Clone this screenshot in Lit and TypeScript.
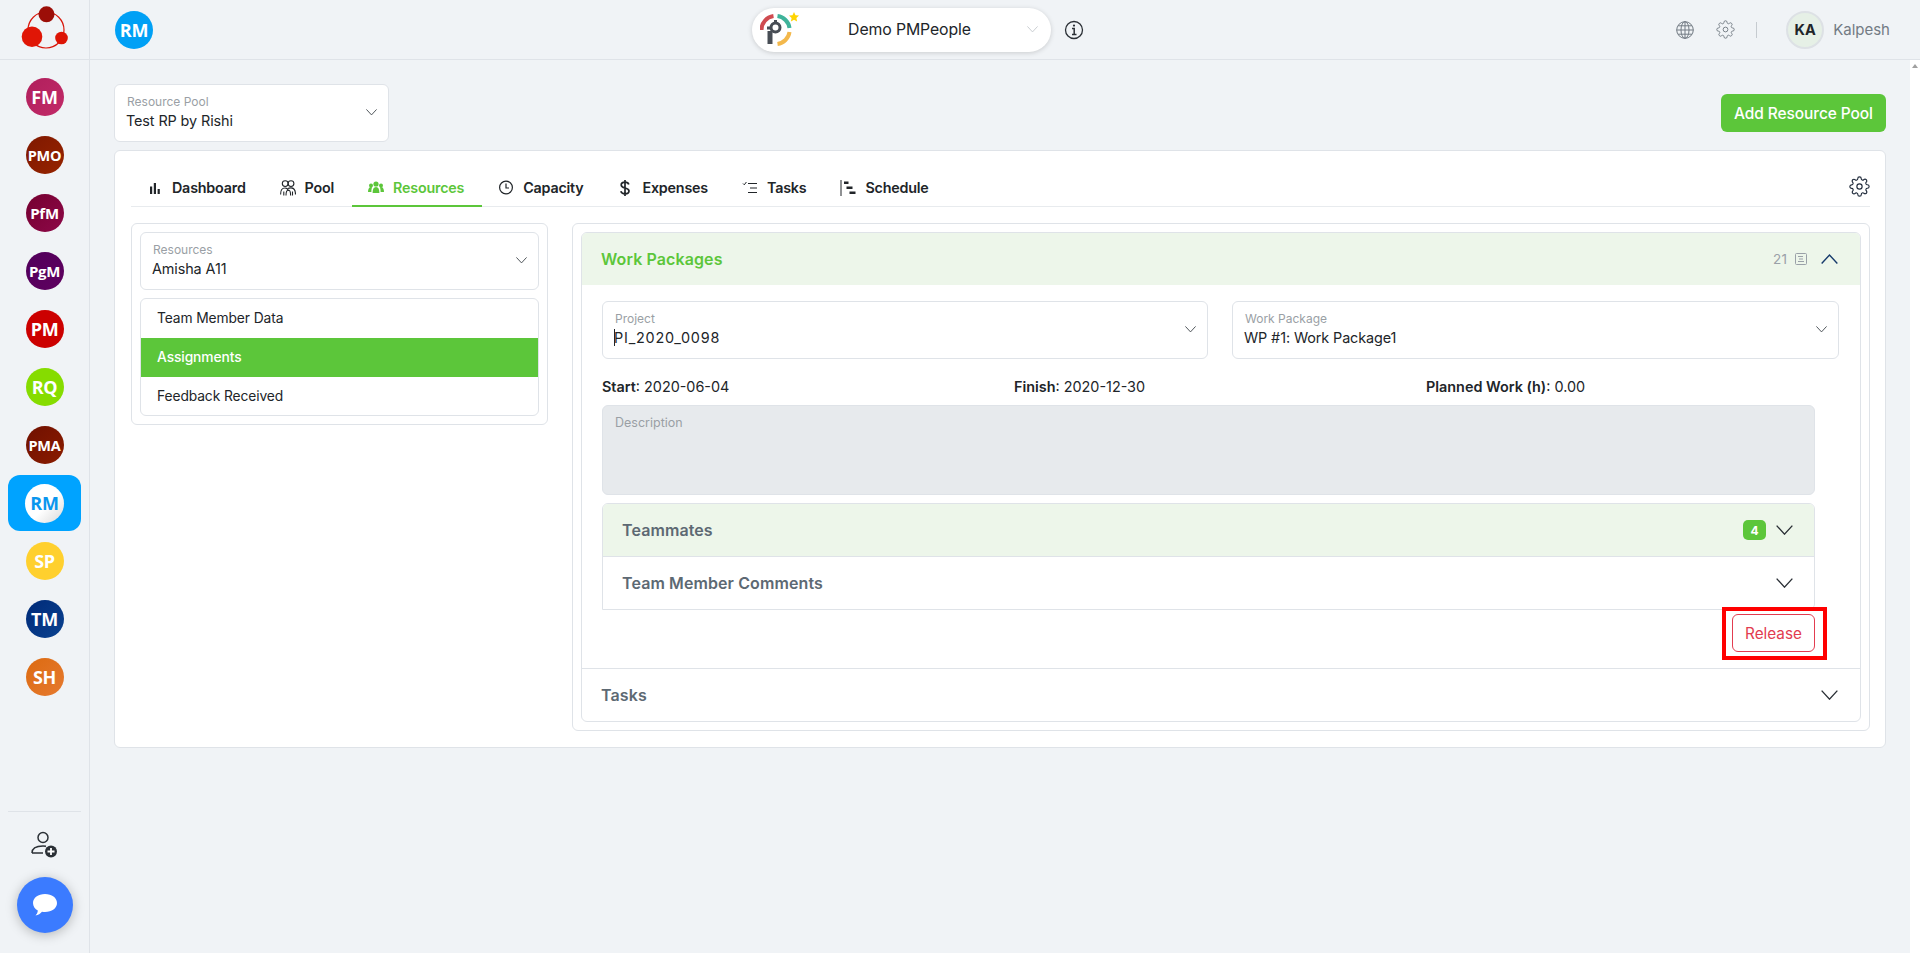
import { LitElement, html, css, svg } from 'lit';
import { customElement } from 'lit/decorators.js';

const MODULES = [
  { code: 'FM', bg: 'linear-gradient(135deg,#b01f5c,#c22a68)', size: 18 },
  { code: 'PMO', bg: 'linear-gradient(135deg,#7f1800,#962400)', size: 14.5 },
  { code: 'PfM', bg: 'linear-gradient(135deg,#750030,#8d0848)', size: 15 },
  { code: 'PgM', bg: 'linear-gradient(135deg,#50005a,#600060)', size: 15 },
  { code: 'PM', bg: '#cc0000', size: 18 },
  { code: 'RQ', bg: '#86dc00', size: 18 },
  { code: 'PMA', bg: 'linear-gradient(135deg,#701000,#8a1c00)', size: 14.5 },
  { code: 'RM', bg: 'linear-gradient(135deg,#fff 55%,#d8d8d8)', size: 18, active: true },
  { code: 'SP', bg: '#ffd02e', size: 18 },
  { code: 'TM', bg: 'linear-gradient(135deg,#002a78,#0a4290)', size: 18 },
  { code: 'SH', bg: 'linear-gradient(135deg,#dc6a10,#e67a30)', size: 18 },
];

const chevron = (w: number, color: string, up = false) => html`
  <svg width=${w} height=${w * 0.6} viewBox="0 0 16 9.6" fill="none" stroke=${color} stroke-width="1.3">
    <path d=${up ? 'M.6 9 8 1l7.4 8' : 'M.6.6 8 8.6 15.4.6'} />
  </svg>
`;

const TAB_ICONS: Record<string, unknown> = {
  Dashboard: svg`<path d="M3 6.5h2.200V14H3zM6.800 3h2.200v11H6.800zM10.600 9h2.200v5h-2.200z" fill="currentColor"/>`,
  Pool: svg`<g fill="none" stroke="currentColor" stroke-width="1.1"><circle cx="5.200" cy="3.600" r="2.900"/><circle cx="11" cy="3.600" r="2.900"/><path d="M.6 14.500c0-4.500 1.400-6.500 4.400-6.500 2 0 3 1 3.400 3M8 8.500c1-.6 2-.6 3-.6 3 0 4.500 2 4.500 6.600M3.800 15.500v-4M12.500 15.500v-4M6 15.500c0-3.500 .8-5.500 2.400-5.500s2.200 2 2.200 5.500"/></g>`,
  Resources: svg`<g fill="currentColor"><circle cx="8" cy="4" r="2.600"/><circle cx="3" cy="5.400" r="2"/><circle cx="13" cy="5.400" r="2"/><path d="M4.600 13c0-4 1-6 3.400-6s3.400 2 3.400 6zM0 12c0-3 1-5 3-5 .8 0 1.200.3 1.200.3C3.500 8.500 3.400 10 3.400 12zM16 12c0-3-1-5-3-5-.8 0-1.200.3-1.200.3.700 1.200.800 2.700.800 4.700z"/></g>`,
  Capacity: svg`<g fill="none" stroke="currentColor" stroke-width="1.2"><circle cx="8" cy="7.5" r="6.400"/><path d="M8 3.500V8H11"/></g>`,
  Expenses: svg`<path d="M11.800 4.400C11.300 2.900 10 2.200 8 2.200c-2.300 0-3.800 1.100-3.800 2.800 0 4 7.800 2 7.800 6 0 1.800-1.600 2.800-4 2.800-2.200 0-3.700-.9-4.200-2.500M8 0v16" fill="none" stroke="currentColor" stroke-width="1.700"/>`,
  Tasks: svg`<path d="M6 3.500h9M8 8h7M6 12.500h9M1 3.500l1.300 1.300L4.400 2" fill="none" stroke="currentColor" stroke-width="1"/>`,
  Schedule: svg`<path d="M1 0v16" stroke="currentColor" stroke-width="1" fill="none"/><path d="M4 1.500h4.500v2.400H4zM6.500 6.500h6v2.400h-6zM9.500 11.500h6v2.400h-6z" fill="currentColor"/>`,
};

const TABS = [
  { name: 'Dashboard' },
  { name: 'Pool' },
  { name: 'Resources', active: true },
  { name: 'Capacity' },
  { name: 'Expenses' },
  { name: 'Tasks' },
  { name: 'Schedule' },
];

const gear = (size: number, color: string, width: number) => html`
  <svg width=${size} height=${size} viewBox="0 0 24 24" fill="none" stroke=${color} stroke-width=${width} stroke-linejoin="round">
    <circle cx="12" cy="12" r="3" />
    <path d="M19.400 15a1.650 1.650 0 0 0 .33 1.820l.06.06a2 2 0 0 1 0 2.830 2 2 0 0 1-2.830 0l-.06-.06a1.650 1.650 0 0 0-1.820-.33 1.650 1.650 0 0 0-1 1.510V21a2 2 0 0 1-2 2 2 2 0 0 1-2-2v-.09A1.650 1.650 0 0 0 9 19.400a1.650 1.650 0 0 0-1.820.33l-.06.06a2 2 0 0 1-2.830 0 2 2 0 0 1 0-2.830l.06-.06a1.650 1.650 0 0 0 .33-1.820 1.650 1.650 0 0 0-1.510-1H3a2 2 0 0 1-2-2 2 2 0 0 1 2-2h.09A1.650 1.650 0 0 0 4.600 9a1.650 1.650 0 0 0-.33-1.820l-.06-.06a2 2 0 0 1 0-2.830 2 2 0 0 1 2.830 0l.06.06a1.650 1.650 0 0 0 1.820.33H9a1.650 1.650 0 0 0 1-1.510V3a2 2 0 0 1 2-2 2 2 0 0 1 2 2v.09a1.650 1.650 0 0 0 1 1.510 1.650 1.650 0 0 0 1.820-.33l.06-.06a2 2 0 0 1 2.830 0 2 2 0 0 1 0 2.830l-.06.06a1.650 1.650 0 0 0-.33 1.820V9a1.650 1.650 0 0 0 1.510 1H21a2 2 0 0 1 2 2 2 2 0 0 1-2 2h-.09a1.650 1.650 0 0 0-1.510 1z" />
  </svg>
`;

@customElement('app-root')
export class AppRoot extends LitElement {
  static styles = css`
    :host {
      display: block;
      height: 953px;
      overflow: hidden;
      background: #f0f3f6;
      font-family: Inter, 'Liberation Sans', sans-serif;
      color: #212529;
      font-size: 14px;
    }
    * { box-sizing: border-box; }
    .shell { display: flex; height: 953px; }

    .side {
      width: 90px;
      flex: none;
      border-right: 1px solid #dfe3e8;
      display: flex;
      flex-direction: column;
      align-items: center;
      padding-bottom: 20px;
    }
    .side-logo {
      height: 60px;
      width: 89px;
      flex: none;
      border-bottom: 1px solid #dfe3e8;
      display: flex;
      align-items: center;
      justify-content: center;
    }
    .mods { display: flex; flex-direction: column; align-items: center; margin-top: 8px; }
    .mod {
      width: 73px;
      height: 58px;
      display: flex;
      align-items: center;
      justify-content: center;
      border-radius: 12px;
    }
    .mod.active { background: #00a3ff; height: 56px; margin: 1px 0; }
    .bubble {
      width: 38px;
      height: 38px;
      border-radius: 50%;
      display: flex;
      align-items: center;
      justify-content: center;
      color: #fff;
      font-family: 'Open Sans', sans-serif;
      font-weight: 700;
      letter-spacing: -0.3px;
    }
    .mod.active .bubble { width: 39px; height: 39px; color: #0a96ee; }
    .side-foot {
      margin-top: auto;
      width: 73px;
      border-top: 1px solid #dfe3e8;
      display: flex;
      flex-direction: column;
      align-items: center;
      padding-top: 19px;
      gap: 18px;
    }
    .chat {
      width: 56px;
      height: 56px;
      border-radius: 50%;
      background: #3b7bff;
      box-shadow: 0 2px 12px rgba(0, 0, 0, 0.25);
      display: flex;
      align-items: center;
      justify-content: center;
    }

    .body { flex: 1; min-width: 0; display: flex; flex-direction: column; }
    .top {
      height: 60px;
      flex: none;
      border-bottom: 1px solid #dfe3e8;
      display: grid;
      grid-template-columns: 637px auto 1fr;
      align-items: center;
      padding: 0 30px 0 25px;
    }
    .rm-badge {
      width: 38px;
      height: 38px;
      border-radius: 50%;
      background: #00a0f5;
      color: #fff;
      font-family: 'Open Sans', sans-serif;
      font-weight: 700;
      font-size: 18px;
      letter-spacing: -0.3px;
      display: flex;
      align-items: center;
      justify-content: center;
    }
    .org { display: flex; align-items: center; gap: 13px; }
    .org-pill {
      width: 299px;
      height: 44px;
      border-radius: 22px;
      background: #fff;
      box-shadow: 0 1px 5px rgba(0, 0, 0, 0.16);
      display: flex;
      align-items: center;
      padding: 0 13px 0 8px;
      font-size: 15.8px;
      letter-spacing: -0.1px;
    }
    .org-pill span { flex: 1; text-align: center; padding-right: 8px; }
    .top-right { display: flex; align-items: center; justify-content: flex-end; }
    .divider { width: 1px; height: 16px; background: #c6cbd0; margin: 0 29px 0 21px; }
    .ava {
      width: 38px;
      height: 38px;
      border-radius: 50%;
      background: #e6f0e6;
      border: 2px solid #dde1e5;
      font-weight: 700;
      font-size: 14.5px;
      display: flex;
      align-items: center;
      justify-content: center;
      margin-right: 9px;
    }
    .user { color: #737b84; font-size: 15px; }

    .page-wrap { flex: 1; display: flex; min-height: 0; }
    .page { flex: 1; min-width: 0; padding: 24px 25px 0 24px; }
    .scroll { width: 10px; flex: none; background: #fff; position: relative; }
    .scroll::before {
      content: '';
      position: absolute;
      top: 4px;
      left: 2px;
      border: 3px solid transparent;
      border-bottom: 4px solid #a0a0a0;
      border-top: 0;
    }
    .page-head { display: flex; align-items: flex-start; justify-content: space-between; margin-bottom: 8px; }
    .add {
      margin-top: 10px;
      margin-right: -1px;
      width: 165px;
      height: 38px;
      background: #5cc63a;
      color: #fff;
      border: none;
      border-radius: 6px;
      font: 500 15.5px Inter, sans-serif;
      letter-spacing: -0.1px;
      padding: 0;
    }

    .field {
      position: relative;
      height: 58px;
      background: #fff;
      border: 1px solid #dfe3e8;
      border-radius: 6px;
      padding: 9px 40px 0 11px;
      display: flex;
      flex-direction: column;
    }
    .field label { font-size: 12px; color: #9a9fa5; line-height: 15px; padding-left: 1px; }
    .field b { font-weight: 400; font-size: 14.4px; line-height: 21px; margin-top: 1px; letter-spacing: -0.1px; }
    .field b.code { letter-spacing: 0.8px; }
    .field svg { position: absolute; right: 11px; top: 24px; }
    .field.pool { width: 275px; }
    .caret { border-left: 1px solid #212529; margin-right: -1px; }

    .card {
      background: #fff;
      border: 1px solid #dfe3e8;
      border-radius: 6px;
      margin-right: -1px;
      height: 598px;
      padding: 15px 15px 0 16px;
    }
    .tabs {
      height: 41px;
      border-bottom: 1px solid #e8ebee;
      display: flex;
      align-items: stretch;
      position: relative;
    }
    .tab {
      display: flex;
      align-items: center;
      gap: 9px;
      padding: 4px 18px 0 16px;
      font-weight: 600;
      font-size: 14.3px;
      letter-spacing: -0.2px;
      margin-bottom: -1px;
      border-bottom: 2px solid transparent;
    }
    .tab svg { flex: none; }
    .tab.active { color: #5cc63a; border-bottom-color: #5cc63a; }
    .tab-gear { margin-left: auto; align-self: center; margin-top: 1px; display: flex; }

    .cols { display: flex; gap: 24px; margin-top: 16px; align-items: flex-start; }
    .left {
      width: 417px;
      flex: none;
      border: 1px solid #dfe3e8;
      border-radius: 6px;
      padding: 8px;
      display: flex;
      flex-direction: column;
      gap: 8px;
    }
    .menu { border: 1px solid #dfe3e8; border-radius: 6px; overflow: hidden; }
    .menu div { height: 39px; line-height: 39px; padding-left: 16px; font-size: 13.8px; letter-spacing: -0.1px; }
    .menu div:last-child { height: 38px; }
    .menu .on { background: #5cc63a; color: #fff; font-weight: 500; }
    .right { flex: 1; min-width: 0; border: 1px solid #dfe3e8; border-radius: 6px; padding: 8px; }
    .acc { border: 1px solid #dfe3e8; border-radius: 6px; overflow: hidden; }
    .acc-head {
      height: 52px;
      display: flex;
      align-items: center;
      justify-content: space-between;
      padding: 0 22px 0 19px;
      font-weight: 600;
      font-size: 16px;
      letter-spacing: 0.1px;
      color: #5d6973;
    }
    .acc-head.main { background: #edf6ea; color: #5cc63a; }
    .acc-head .tools { display: flex; align-items: center; }
    .count { color: #9aa1a8; font-size: 13.5px; font-weight: 400; margin-right: 8px; }
    .acc-body { padding: 16px 20px 0; }
    .two { display: grid; grid-template-columns: 606px 607px; gap: 24px; margin-right: -3px; }
    .meta {
      display: grid;
      grid-template-columns: repeat(3, 412px);
      margin-top: 17px;
      height: 20px;
      align-items: center;
      font-size: 14.4px;
    }
    .meta b { font-weight: 600; }
    .desc {
      width: 1213px;
      height: 90px;
      margin-top: 9px;
      background: #e7eaed;
      border: 1px solid #dfe3e8;
      border-radius: 6px;
      padding: 9px 12px;
      font-size: 12.5px;
      color: #9a9fa5;
    }
    .sub { width: 1213px; margin-top: 8px; border: 1px solid #dfe3e8; border-radius: 6px 6px 6px 0; overflow: hidden; }
    .sub .acc-head { height: 52px; padding-right: 21px; padding-left: 19px; }
    .sub .acc-head.first { height: 53px; background: #edf6ea; border-bottom: 1px solid #dfe3e8; }
    .sub .tools { gap: 10px; }
    .pill {
      background: #5cc63a;
      color: #fff;
      width: 23px;
      height: 20px;
      border-radius: 5px;
      font-size: 12px;
      font-weight: 700;
      letter-spacing: 0;
      display: flex;
      align-items: center;
      justify-content: center;
    }
    .release-row { width: 1213px; height: 58px; padding-top: 4px; display: flex; justify-content: flex-end; }
    .release {
      position: relative;
      width: 83px;
      height: 38px;
      color: #e23c50;
      border: 1px solid #e23c50;
      border-radius: 6px;
      background: #fff;
      font: 400 15.3px Inter, sans-serif;
      padding: 0;
    }
    .release::after {
      content: '';
      position: absolute;
      inset: -8px -13px -9px -11px;
      border: 4px solid #ff0000;
      pointer-events: none;
    }
    .tasks-head { border-top: 1px solid #dfe3e8; height: 53px; }
  `;

  private renderLogo() {
    return html`<svg width="48" height="50" viewBox="0 0 48 50">
      <circle cx="25" cy="25" r="18" fill="none" stroke="#d8160a" stroke-width="1.2" />
      <circle cx="25.5" cy="9.3" r="8" fill="#9c0e08" />
      <circle cx="11" cy="31.7" r="10.3" fill="#e01606" />
      <circle cx="40.5" cy="33" r="6.3" fill="#dd1405" />
    </svg>`;
  }

  private renderOrgLogo() {
    return html`<svg width="40" height="36" viewBox="0 0 40 36" fill="none">
      <path d="M1.500 18A14 14 0 0 1 13.500 4.100" stroke="#cf4b50" stroke-width="4" />
      <path d="M17.500 4.100A14 14 0 0 1 29.500 16" stroke="#3fb39a" stroke-width="4" />
      <path d="M29.500 20A14 14 0 0 1 17.500 31.900" stroke="#f3b84c" stroke-width="4" />
      <circle cx="15.5" cy="15.5" r="4.500" stroke="#474d55" stroke-width="3" />
      <path d="M15.500 8v3M7 16h4" stroke="#474d55" stroke-width="3" />
      <path d="M10 19v13" stroke="#474d55" stroke-width="5" />
      <path d="M34 0l1.500 3.200 3.500.4-2.600 2.400.7 3.500-3.100-1.800-3.100 1.800.7-3.500L29 3.600l3.500-.4z" fill="#ffd400" />
    </svg>`;
  }

  render() {
    return html`
      <div class="shell">
        <aside class="side">
          <div class="side-logo">${this.renderLogo()}</div>
          <div class="mods">
            ${MODULES.map(m => html`
              <div class="mod ${m.active ? 'active' : ''}">
                <div class="bubble" style="background:${m.bg};font-size:${m.size}px">${m.code}</div>
              </div>
            `)}
          </div>
          <div class="side-foot">
            <svg width="28" height="28" viewBox="0 0 28 28" fill="none" stroke="#2b3036" stroke-width="1.5">
              <circle cx="12" cy="6.500" r="5" />
              <path d="M1 22c0-5 5-7 11-7 1 0 2 0 3 .2M1 22h11" />
              <circle cx="20" cy="20.500" r="6" fill="#2b3036" stroke="none" />
              <path d="M20 17v7M16.500 20.500h7" stroke="#fff" stroke-width="1.8" />
            </svg>
            <div class="chat">
              <svg width="26" height="24" viewBox="0 0 26 24"><path d="M13 1c6.800 0 12 3.800 12 9s-5.200 9-12 9c-1 0-2-.1-3-.3C8.500 20.500 6 22 3.500 22.500c1-1 2.300-3 2.300-5C3 16 1 13.300 1 10 1 4.800 6.200 1 13 1z" fill="#fff" /></svg>
            </div>
          </div>
        </aside>

        <div class="body">
          <header class="top">
            <div><div class="rm-badge">RM</div></div>
            <div class="org">
              <div class="org-pill">
                ${this.renderOrgLogo()}
                <span>Demo PMPeople</span>
                ${chevron(11, '#c4c8cc')}
              </div>
              <svg width="20" height="20" viewBox="0 0 20 20" fill="none" stroke="#2b3036">
                <circle cx="10" cy="10" r="8.500" stroke-width="1.3" />
                <path d="M8 8.500h2.200V14M8 14.500h4.500" stroke-width="1.5" />
                <circle cx="10" cy="5.600" r="1.100" fill="#2b3036" stroke="none" />
              </svg>
            </div>
            <div class="top-right">
              <svg width="18" height="18" viewBox="0 0 18 18" fill="none" stroke="#737b84" stroke-width="1" style="margin-right:22px">
                <circle cx="9" cy="9" r="8.300" />
                <ellipse cx="9" cy="9" rx="4" ry="8.300" />
                <path d="M9 .7v16.600M.7 9h16.600M2 4.800h14M2 13.200h14" />
              </svg>
              ${gear(19, '#737b84', 1.2)}
              <div class="divider"></div>
              <div class="ava">KA</div>
              <div class="user">Kalpesh</div>
            </div>
          </header>

          <div class="page-wrap">
            <main class="page">
              <div class="page-head">
                <div class="field pool">
                  <label>Resource Pool</label>
                  <b>Test RP by Rishi</b>
                  ${chevron(11, '#3c4248')}
                </div>
                <button class="add">Add Resource Pool</button>
              </div>

              <section class="card">
                <nav class="tabs">
                  ${TABS.map(t => html`
                    <div class="tab ${t.active ? 'active' : ''}">
                      <svg width="16" height="16" viewBox="0 0 16 16">${TAB_ICONS[t.name]}</svg>
                      ${t.name}
                    </div>
                  `)}
                  <div class="tab-gear">${gear(21, '#1f2a3a', 1.3)}</div>
                </nav>

                <div class="cols">
                  <div class="left">
                    <div class="field">
                      <label>Resources</label>
                      <b>Amisha A11</b>
                      ${chevron(11, '#3c4248')}
                    </div>
                    <div class="menu">
                      <div>Team Member Data</div>
                      <div class="on">Assignments</div>
                      <div>Feedback Received</div>
                    </div>
                  </div>

                  <div class="right">
                    <div class="acc">
                      <div class="acc-head main">
                        Work Packages
                        <div class="tools">
                          <span class="count">21</span>
                          <svg width="12" height="12" viewBox="0 0 12 12" fill="none" stroke="#9aa1a8" style="margin-right:14px">
                            <rect x=".5" y=".5" width="11" height="11" rx="1" />
                            <path d="M3 3.500h5M4 6h4M3 8.500h6" />
                          </svg>
                          ${chevron(17, '#163a6b', true)}
                        </div>
                      </div>
                      <div class="acc-body">
                        <div class="two">
                          <div class="field">
                            <label>Project</label>
                            <b class="code"><span class="caret"></span>PI_2020_0098</b>
                            ${chevron(11, '#3c4248')}
                          </div>
                          <div class="field">
                            <label>Work Package</label>
                            <b>WP #1: Work Package1</b>
                            ${chevron(11, '#3c4248')}
                          </div>
                        </div>
                        <div class="meta">
                          <div><b>Start</b>: 2020-06-04</div>
                          <div><b>Finish</b>: 2020-12-30</div>
                          <div><b>Planned Work (h)</b>: 0.00</div>
                        </div>
                        <div class="desc">Description</div>
                        <div class="sub">
                          <div class="acc-head first">
                            Teammates
                            <div class="tools"><span class="pill">4</span>${chevron(17, '#2b3036')}</div>
                          </div>
                          <div class="acc-head">
                            Team Member Comments
                            <div class="tools">${chevron(17, '#2b3036')}</div>
                          </div>
                        </div>
                        <div class="release-row"><button class="release">Release</button></div>
                      </div>
                      <div class="acc-head tasks-head">
                        Tasks
                        ${chevron(17, '#2b3036')}
                      </div>
                    </div>
                  </div>
                </div>
              </section>
            </main>
            <div class="scroll"></div>
          </div>
        </div>
      </div>
    `;
  }
}

declare global {
  interface HTMLElementTagNameMap {
    'app-root': AppRoot;
  }
}
